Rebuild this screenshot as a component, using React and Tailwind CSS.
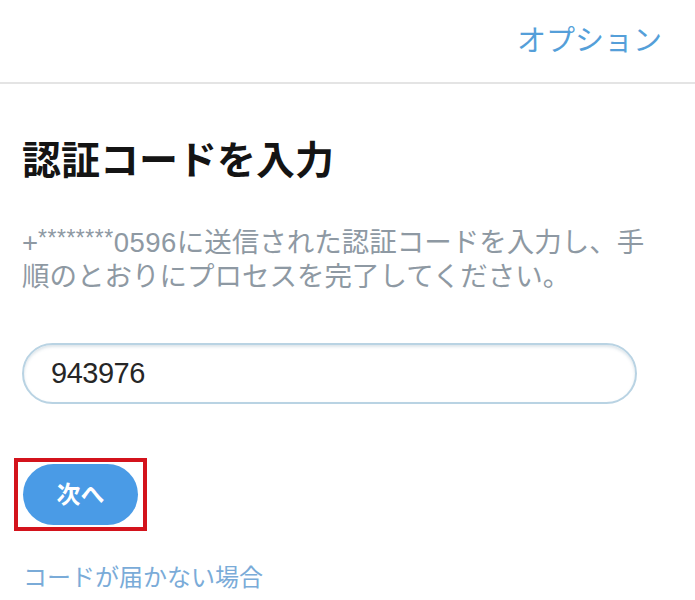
export default function App() {
  const jp = { fontFamily: '"Liberation Sans", "Noto Sans CJK JP", sans-serif' };
  return (
    <div className="w-[695px] h-[600px] bg-white overflow-hidden" style={jp}>
      <div className="h-[82px] flex items-center justify-end pr-[33px]">
        <span className="text-[29px] leading-none text-[#559fd9]">オプション</span>
      </div>
      <div className="h-[2px] bg-[#e4e4e4]" />
      <div className="pl-[22px] pr-[20px]">
        <h1 className="mt-[54px] text-[39px] leading-[46px] font-bold text-[#141414]">認証コードを入力</h1>
        <p className="mt-[42px] text-[27.5px] leading-[34px] text-[#8e99a3]">
          +<span className="relative top-[-6px] text-[23px] leading-none tracking-[0.5px]">********</span><span className="tracking-[0.5px]">0596</span>に送信された認証コードを入力し、手
          <br />
          順のとおりにプロセスを完了してください。
        </p>
        <div className="mt-[49px] w-[615px] h-[61px] rounded-full border-2 border-[#b9d3e3] shadow-[inset_0_2px_3px_rgba(120,150,170,0.25)] flex items-center pl-[27px]">
          <span className="text-[29px] text-[#262626] tracking-[-0.5px]">943976</span>
        </div>
      </div>
      <div className="mt-[54px] ml-[14px] w-[133px] h-[73px] border-[4px] border-[#d3131c] flex items-center justify-center">
        <div className="w-[115px] h-[61px] rounded-full bg-[#4a9be6] flex items-center justify-center">
          <span className="text-[24px] font-bold text-white">次へ</span>
        </div>
      </div>
      <div className="mt-[35px] pl-[23px] h-[24px] flex items-center">
        <span className="text-[24px] leading-none text-[#7aabd8]">コードが届かない場合</span>
      </div>
    </div>
  );
}
